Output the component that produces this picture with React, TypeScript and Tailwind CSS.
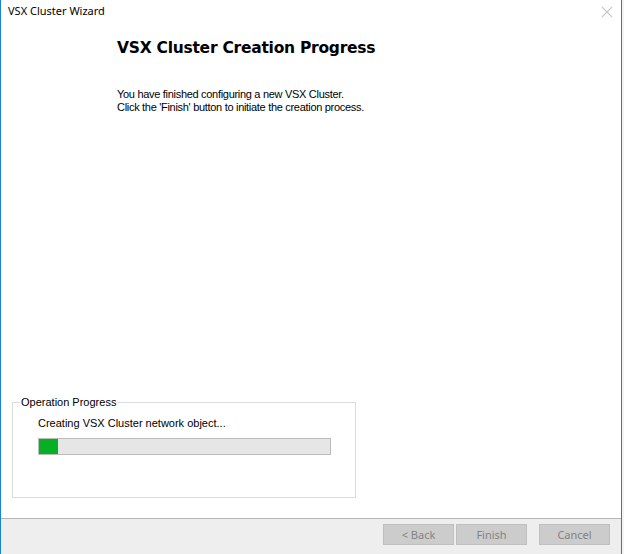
import * as React from "react";

const ui = { fontFamily: '"Noto Sans", "Open Sans", sans-serif' };
const classic = { fontFamily: '"Liberation Sans", Arial, sans-serif' };

function WizardButton({ label, className = "" }: { label: string; className?: string }) {
  return (
    <button
      disabled
      className={`h-[21px] w-[71px] border border-[#bfbfbf] bg-[#cccccc] text-[11px] leading-none text-[#838383] ${className}`}
      style={ui}
    >
      {label}
    </button>
  );
}

export default function App() {
  return (
    <div className="flex h-[554px] w-[624px] bg-white">
      <div className="flex h-full w-[622px] flex-col border-x border-[#1883d7] bg-white">
        {/* Title bar */}
        <div className="flex h-[30px] items-start justify-between pl-[7px] pr-[8px] pt-[2px]">
          <span className="text-[11px] leading-[17px] text-black" style={ui}>
            VSX Cluster Wizard
          </span>
          <svg width="12" height="12" viewBox="0 0 12 12" className="mt-[4px]">
            <path d="M1 1 L11 11 M11 1 L1 11" stroke="#c8c8c8" strokeWidth="1.1" fill="none" />
          </svg>
        </div>

        {/* Page content */}
        <div className="flex flex-1 flex-col">
          <div className="pl-[116px] pt-[8px]">
            <h1
              className="text-[15.5px] font-bold leading-[20px] text-black"
              style={{ fontFamily: '"DejaVu Sans", Verdana, sans-serif', letterSpacing: "-0.25px" }}
            >
              VSX Cluster Creation Progress
            </h1>
            <p
              className="mt-[30px] text-[11px] leading-[13px] text-black"
              style={{ ...classic, letterSpacing: "-0.3px" }}
            >
              You have finished configuring a new VSX Cluster.
              <br />
              Click the 'Finish' button to initiate the creation process.
            </p>
          </div>

          <fieldset className="mb-[20px] ml-[11px] mt-auto h-[102px] w-[344px] border border-[#dcdcdc]">
            <legend className="ml-[7px] px-[1px] text-[11px] leading-[13px] text-black" style={classic}>
              Operation Progress
            </legend>
            <div className="pl-[25px] pt-[8px]">
              <div className="text-[11px] leading-[13px] text-black" style={classic}>
                Creating VSX Cluster network object...
              </div>
              <div className="mt-[8px] flex h-[17px] w-[293px] border border-[#bcbcbc] bg-[#e6e6e6]">
                <div className="h-full w-[19px] bg-[#06b025]" />
              </div>
            </div>
          </fieldset>
        </div>

        {/* Button bar */}
        <div className="flex h-[36px] items-start justify-end border-t border-[#b4b4b4] bg-[#eeeeee] pr-[11px] pt-[5px]">
          <WizardButton label="< Back" />
          <WizardButton label="Finish" className="ml-[2px]" />
          <WizardButton label="Cancel" className="ml-[12px]" />
        </div>
      </div>
      <div className="h-full flex-1 bg-[#f4f4f4]" />
    </div>
  );
}
